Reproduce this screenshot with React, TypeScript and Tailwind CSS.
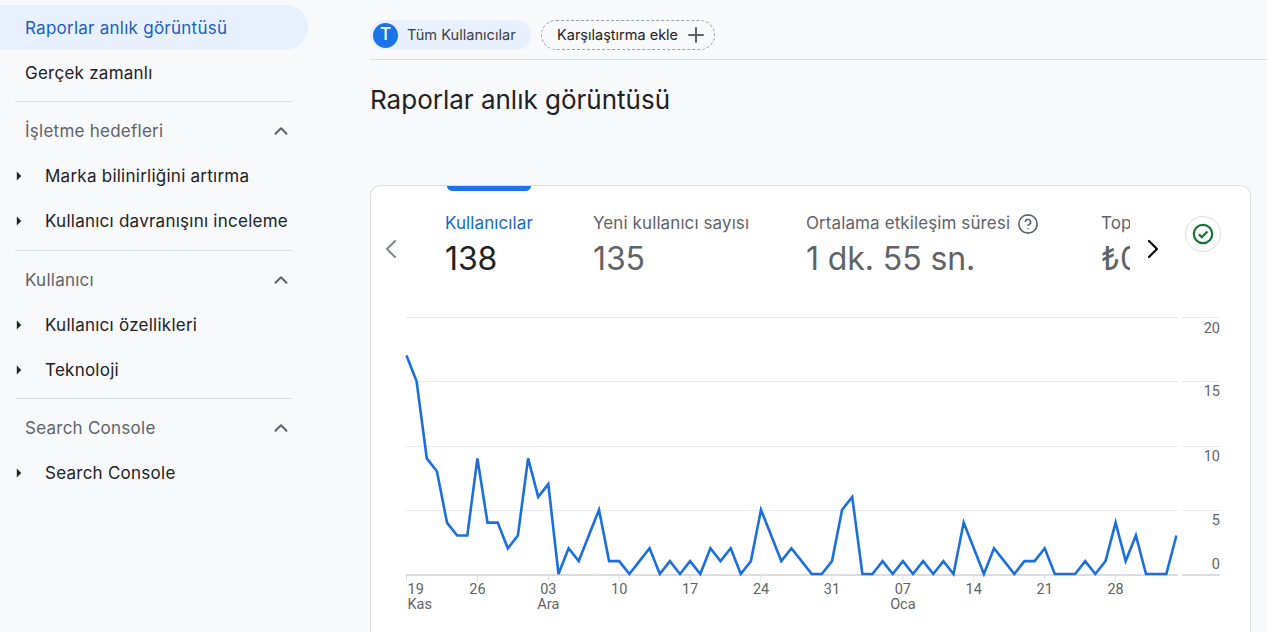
import { ChevronUp, ChevronLeft, ChevronRight, Plus, CircleHelp } from "lucide-react";

const font = "font-['Inter','Noto_Sans',sans-serif]";

const values = [17, 15, 9, 8, 4, 3, 3, 9, 4, 4, 2, 3, 9, 6, 7, 0, 2, 1, 3, 5, 1, 1, 0, 1, 2, 0, 1, 0, 1, 0, 2, 1, 2, 0, 1, 5, 3, 1, 2, 1, 0, 0, 1, 5, 6, 0, 0, 1, 0, 1, 0, 1, 0, 1, 0, 4, 2, 0, 2, 1, 0, 1, 1, 2, 0, 0, 0, 1, 0, 1, 4, 1, 3, 0, 0, 0, 3];

const X0 = 406.5;
const STEP = 10.13;
const Y0 = 574;
const UNIT = 12.85;
const points = values.map((v, i) => `${(X0 + i * STEP).toFixed(1)},${(Y0 - v * UNIT).toFixed(1)}`).join(" ");

const xTicks = [
  { i: 0, label: "19", sub: "Kas" },
  { i: 7, label: "26" },
  { i: 14, label: "03", sub: "Ara" },
  { i: 21, label: "10" },
  { i: 28, label: "17" },
  { i: 35, label: "24" },
  { i: 42, label: "31" },
  { i: 49, label: "07", sub: "Oca" },
  { i: 56, label: "14" },
  { i: 63, label: "21" },
  { i: 70, label: "28" },
];

const grid = [317, 381, 446, 510];
const yLabels = [
  { y: 333, t: "20" },
  { y: 396, t: "15" },
  { y: 461, t: "10" },
  { y: 525, t: "5" },
  { y: 569, t: "0" },
];

function Caret() {
  return (
    <svg width="6" height="10" viewBox="0 0 6 10" className="mr-[23px] ml-[16px] shrink-0">
      <path d="M0.8 0.5 L5.2 5 L0.8 9.5 Z" fill="#202124" />
    </svg>
  );
}

function Item({ label }: { label: string }) {
  return (
    <div className="flex h-[45px] items-center text-[#202124]">
      <Caret />
      <span className="pt-[2px]">{label}</span>
    </div>
  );
}

function Section({ label }: { label: string }) {
  return (
    <div className="flex h-[45px] w-[292px] items-center justify-between pl-[25px] text-[#5f6368]">
      <span className="pt-[2px]">{label}</span>
      <ChevronUp size={22} strokeWidth={2.2} className="text-[#5f6368]" />
    </div>
  );
}

function Divider() {
  return <div className="my-[6.25px] ml-[15px] h-px w-[277px] bg-[#dadce0]" />;
}

function Metric({ label, value, width, active, help }: { label: string; value: string; width: string; active?: boolean; help?: boolean }) {
  return (
    <div className={`${width} shrink-0`}>
      <div className={`flex h-[24px] items-center gap-[7px] whitespace-nowrap text-[17px] tracking-[0.1px] ${active ? "text-[#1a66d0]" : "text-[#5f6368]"}`}>
        {label}
        {help && <CircleHelp size={22} strokeWidth={1.8} className="text-[#5f6368]" />}
      </div>
      <div className={`mt-[3px] whitespace-nowrap text-[32px] leading-[40px] tracking-[-0.1px] ${active ? "text-[#202124]" : "text-[#5f6368]"}`}>{value}</div>
    </div>
  );
}

export default function App() {
  return (
    <div className={`${font} flex h-[632px] w-[1267px] overflow-hidden bg-[#f8f9fb] text-[17px] tracking-[0.25px]`}>
      <aside className="w-[370px] shrink-0 pt-[5px]">
        <div className="flex h-[45px] w-[308px] items-center rounded-r-full bg-[#e8f0fe] pt-[2px] pl-[25px] text-[#1a5fc4]">Raporlar anlık görüntüsü</div>
        <div className="flex h-[45px] items-center pt-[2px] pl-[25px] text-[#202124]">Gerçek zamanlı</div>
        <Divider />
        <Section label="İşletme hedefleri" />
        <Item label="Marka bilinirliğini artırma" />
        <Item label="Kullanıcı davranışını inceleme" />
        <Divider />
        <Section label="Kullanıcı" />
        <Item label="Kullanıcı özellikleri" />
        <Item label="Teknoloji" />
        <Divider />
        <Section label="Search Console" />
        <Item label="Search Console" />
      </aside>

      <main className="min-w-0 flex-1">
        <div className="flex h-[60px] items-start gap-[10px] border-b border-[#dadce0] pt-[20px] tracking-normal">
          <div className="flex h-[30px] w-[161px] items-center rounded-full bg-[#e8f0fe] pl-[3px]">
            <div className="flex h-[25px] w-[25px] items-center justify-center rounded-full bg-[#1a73e8] text-[17px] font-medium text-white">T</div>
            <span className="ml-[9px] pt-[2px] text-[14.6px] text-[#3c4043]">Tüm Kullanıcılar</span>
          </div>
          <div className="flex h-[30px] w-[174px] items-center rounded-full border border-dashed border-[#9aa0a6] pl-[15px] text-[14.5px] text-[#202124]">
            Karşılaştırma ekle
            <Plus size={24} strokeWidth={2} className="ml-[6px] shrink-0 text-[#5f6368]" />
          </div>
        </div>
        <h1 className="mt-[22px] h-[36px] text-[26px] leading-[36px] font-normal tracking-normal text-[#202124]">Raporlar anlık görüntüsü</h1>

        <section className="mt-[67px] h-[460px] w-[881px] overflow-hidden rounded-t-[10px] border border-b-0 border-[#dadce0] bg-white tracking-normal">
          <div className="flex h-[124px] items-start">
            <ChevronLeft size={32} strokeWidth={1.5} className="mt-[47px] ml-[4px] shrink-0 text-[#80868b]" />
            <div className="ml-[38px] w-[723px]">
              <div className="ml-[2px] h-[5px] w-[84px] rounded-b-[5px] bg-[#1a73e8]" />
              <div className="mt-[21px] flex w-[685px] overflow-hidden">
                <Metric label="Kullanıcılar" value="138" width="w-[148px]" active />
                <Metric label="Yeni kullanıcı sayısı" value="135" width="w-[213px]" />
                <Metric label="Ortalama etkileşim süresi" value="1 dk. 55 sn." width="w-[295px]" help />
                <Metric label="Toplam gelir" value="₺0,00" width="w-[120px]" />
              </div>
            </div>
            <ChevronRight size={32} strokeWidth={1.6} className="mt-[47px] -ml-[31px] shrink-0 text-black" />
            <div className="mt-[30px] ml-[16px] flex h-[36px] w-[36px] shrink-0 items-center justify-center rounded-full border border-[#dadce0] bg-white">
              <svg width="22" height="22" viewBox="0 0 22 22" fill="none">
                <circle cx="11" cy="11" r="9.2" stroke="#137333" strokeWidth="2.2" />
                <path d="M6.8 11.2 L9.8 14.2 L15.4 8.4" stroke="#137333" strokeWidth="2.2" />
              </svg>
            </div>
          </div>
          <svg width="881" height="322" viewBox="371 310 881 322" className="block font-['Roboto',sans-serif]">
            {grid.map((y) => (
              <g key={y} stroke="#e8eaed" strokeWidth="1">
                <line x1="406" x2="1178" y1={y + 0.5} y2={y + 0.5} />
                <line x1="1182" x2="1220" y1={y + 0.5} y2={y + 0.5} />
              </g>
            ))}
            <g stroke="#dadce0" strokeWidth="2">
              <line x1="406" x2="1178" y1="575" y2="575" />
              <line x1="1182" x2="1220" y1="575" y2="575" />
            </g>
            {xTicks.map((t) => {
              const x = X0 + t.i * STEP;
              return (
                <g key={t.label} fill="#5f6368" fontSize="14.5">
                  <line x1={x} x2={x} y1="575" y2="581" stroke="#dadce0" strokeWidth="1" />
                  <text x={t.i === 0 ? x + 1 : x} y="594" textAnchor={t.i === 0 ? "start" : "middle"}>{t.label}</text>
                  {t.sub && (
                    <text x={t.i === 0 ? x + 1 : x} y="609" textAnchor={t.i === 0 ? "start" : "middle"}>{t.sub}</text>
                  )}
                </g>
              );
            })}
            {yLabels.map((l) => (
              <text key={l.t} x="1220" y={l.y} textAnchor="end" fontSize="14.5" fill="#5f6368">{l.t}</text>
            ))}
            <polyline points={points} fill="none" stroke="#1a6fdc" strokeWidth="2.6" strokeLinejoin="miter" />
          </svg>
        </section>
      </main>
    </div>
  );
}
